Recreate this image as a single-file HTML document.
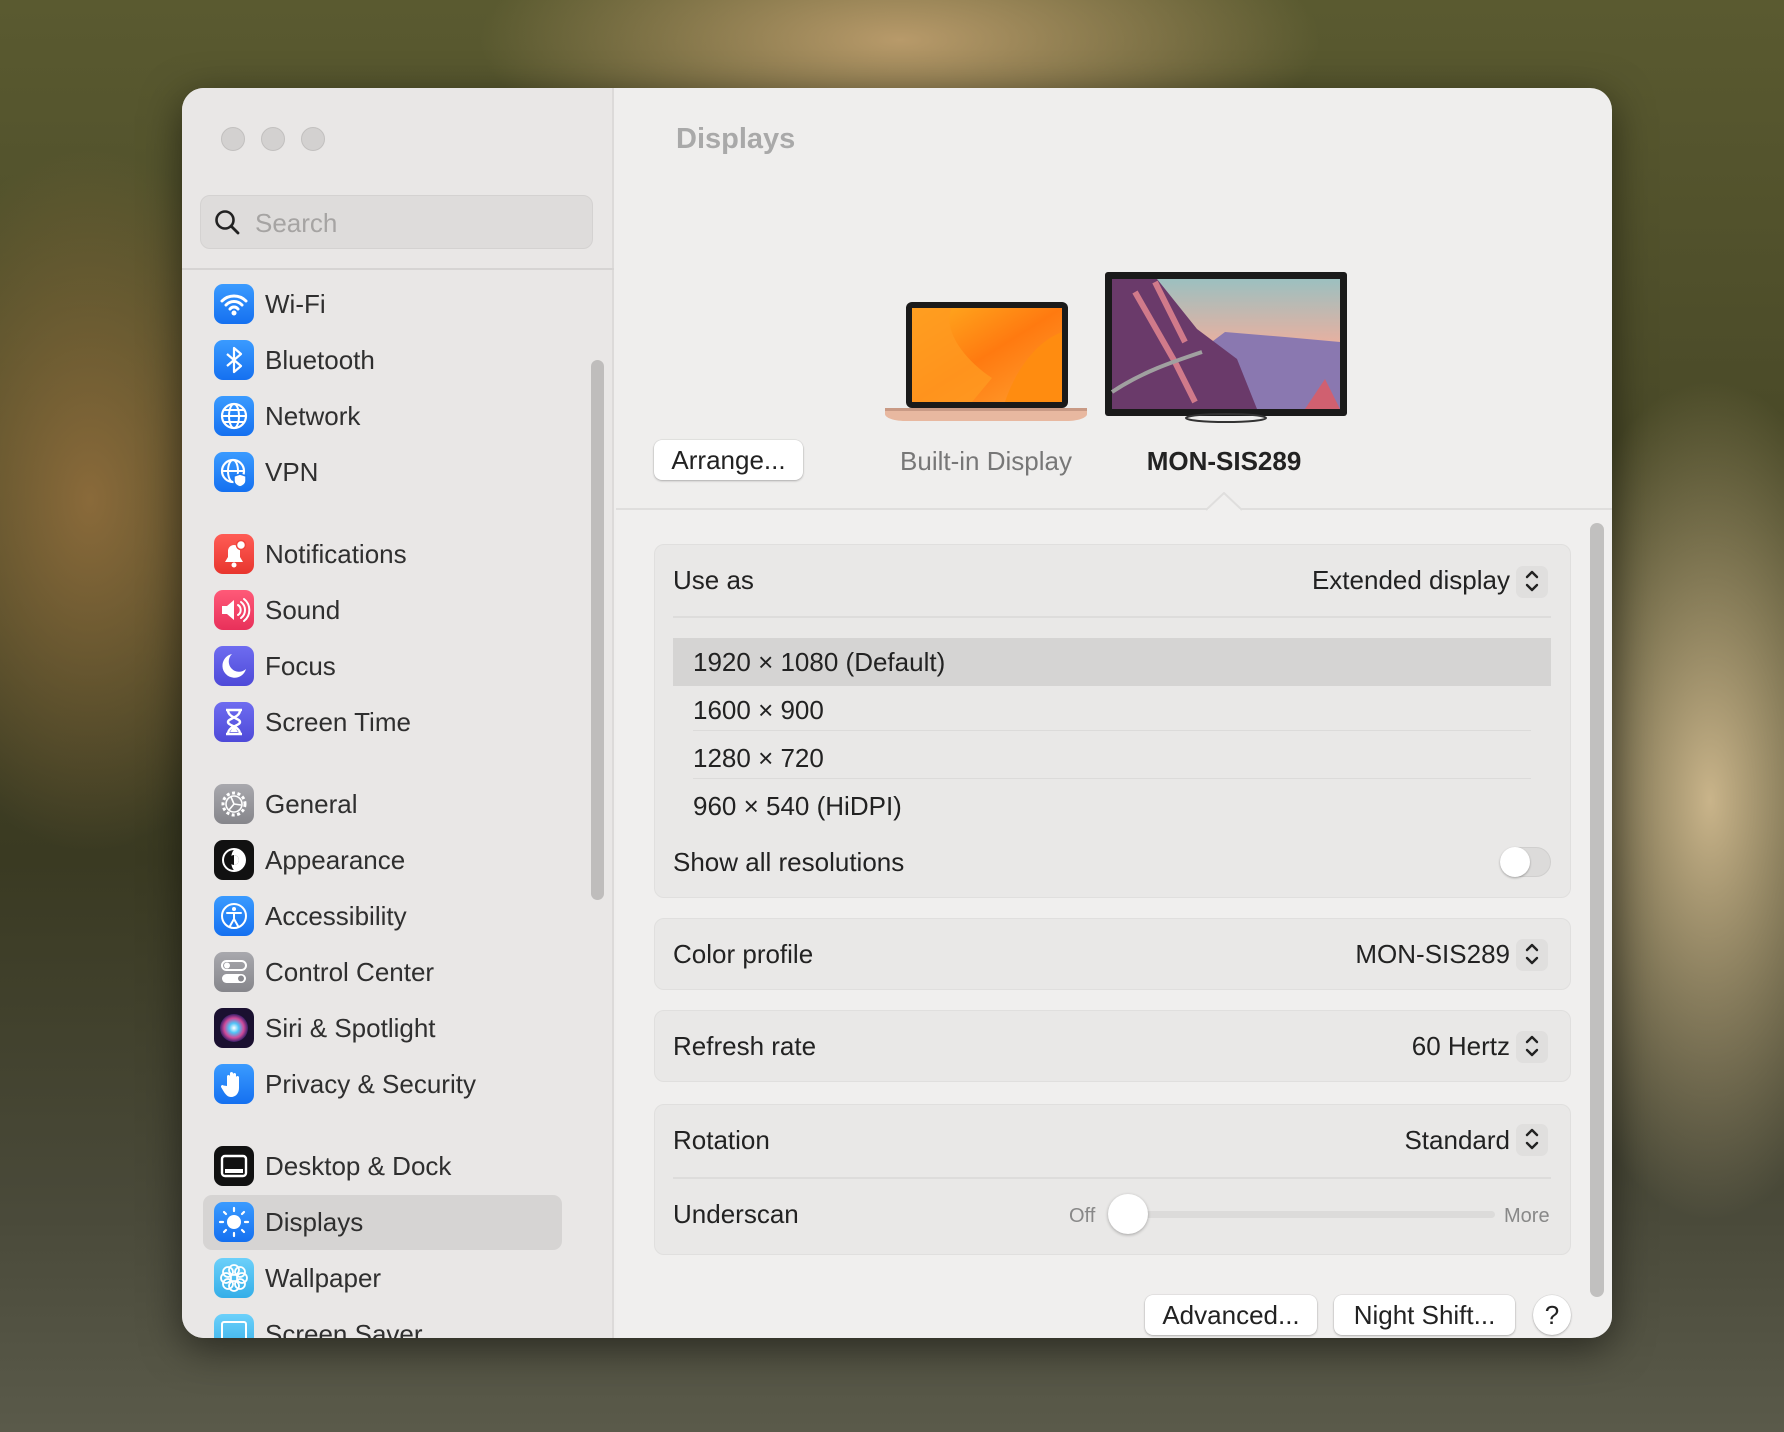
<!DOCTYPE html>
<html><head><meta charset="utf-8">
<style>
*{margin:0;padding:0;box-sizing:border-box}
html,body{width:1784px;height:1432px;overflow:hidden}
body{position:relative;font-family:"Liberation Sans",sans-serif;
background:
radial-gradient(ellipse 300px 500px at 90px 500px,#8a6a3a 0%,rgba(90,60,30,0) 70%),
radial-gradient(ellipse 260px 600px at 1710px 800px,#c9b48a 0%,rgba(120,110,70,0) 70%),
radial-gradient(ellipse 600px 200px at 900px 40px,#b89a6a 0%,rgba(80,80,40,0) 70%),
linear-gradient(180deg,#5a5a30 0%,#4a4a28 30%,#3a3a22 60%,#4a4a3a 85%,#5a5a4a 100%);}
.win{position:absolute;left:182px;top:88px;width:1430px;height:1250px;border-radius:22px;overflow:hidden;background:#efeeed;box-shadow:0 10px 40px rgba(0,0,0,.5)}
.side{position:absolute;left:0;top:0;width:432px;height:1250px;background:#e9e7e6;border-right:2px solid #dcdad9}
.tl{position:absolute;top:39px;width:24px;height:24px;border-radius:50%;background:#d3d1d0;border:1px solid #c2c0bf}
.search{position:absolute;left:18px;top:107px;width:393px;height:54px;border-radius:10px;background:#dedcdb;border:1px solid #d4d2d1}
.search span{position:absolute;left:54px;top:12px;font-size:26px;color:#a6a4a3}
.sep{position:absolute;left:0;top:180px;width:432px;height:2px;background:#d6d4d3}
.item{position:absolute;left:32px;height:40px;width:380px}
.item .ic{position:absolute;left:0;top:0;width:40px;height:40px;border-radius:9px;overflow:hidden}
.item .t{position:absolute;left:51px;top:5px;font-size:26px;color:#2f2f2f;white-space:nowrap}
.sel{position:absolute;left:21px;top:1107px;width:359px;height:55px;border-radius:9px;background:#d6d4d3}
.sscroll{position:absolute;left:409px;top:272px;width:13px;height:540px;border-radius:7px;background:#bfbdbc}
.main{position:absolute;left:434px;top:0;width:996px;height:1250px}
.title{position:absolute;left:60px;top:35px;font-size:29px;font-weight:bold;color:#a9a9a9}
.btn{position:absolute;background:#fff;border-radius:8px;box-shadow:0 1px 2px rgba(0,0,0,.25),0 0 0 .5px rgba(0,0,0,.08);font-size:26px;color:#222;text-align:center}
.lbl{position:absolute;font-size:26px;white-space:nowrap}
.hdrline{position:absolute;left:0;top:420px;width:996px;height:2px;background:#dfdedd}
.lower{position:absolute;left:0;top:421px;width:996px;height:829px;background:#f0efee}
.grp{position:absolute;left:38px;width:917px;border-radius:10px;background:#e9e8e7;border:1px solid #e0dfde}
.row{position:absolute;font-size:26px;color:#222;white-space:nowrap}
.step{position:absolute;width:32px;height:32px;border-radius:7px;background:#e0dfde}
.mscroll{position:absolute;left:974px;top:435px;width:14px;height:774px;border-radius:7px;background:#c1c0bf}
</style></head><body>
<div class="win">
 <div class="side">
  <div class="tl" style="left:39px"></div><div class="tl" style="left:79px"></div><div class="tl" style="left:119px"></div>
  <div class="search"><svg width="30" height="30" style="position:absolute;left:12px;top:12px" viewBox="0 0 30 30"><circle cx="12" cy="12" r="8.5" fill="none" stroke="#222" stroke-width="2.6"/><path d="M18 18l7 7" stroke="#222" stroke-width="2.8" stroke-linecap="round"/></svg><span>Search</span></div>
  <div class="sep"></div>
  <div class="sscroll"></div>
  <div class="sel"></div>

  <div class="item" style="top:196px"><div class="ic" style="background:linear-gradient(#3a9bff,#1570f0)"><svg width="40" height="40" viewBox="0 0 40 40"><path d="M8 17a17 17 0 0 1 24 0M12 21a11 11 0 0 1 16 0M16 25a5 5 0 0 1 8 0" fill="none" stroke="#fff" stroke-width="3" stroke-linecap="round"/><circle cx="20" cy="29" r="2.5" fill="#fff"/></svg></div><div class="t">Wi-Fi</div></div>
  <div class="item" style="top:252px"><div class="ic" style="background:linear-gradient(#3a9bff,#1570f0)"><svg width="40" height="40" viewBox="0 0 40 40"><path d="M13 14l14 12-7 6V8l7 6-14 12" fill="none" stroke="#fff" stroke-width="2.2" stroke-linejoin="round"/></svg></div><div class="t">Bluetooth</div></div>
  <div class="item" style="top:308px"><div class="ic" style="background:linear-gradient(#3a9bff,#1570f0)"><svg width="40" height="40" viewBox="0 0 40 40"><circle cx="20" cy="20" r="12" fill="none" stroke="#fff" stroke-width="2.2"/><ellipse cx="20" cy="20" rx="5" ry="12" fill="none" stroke="#fff" stroke-width="2"/><path d="M8 20h24M10 14h20M10 26h20" stroke="#fff" stroke-width="2"/></svg></div><div class="t">Network</div></div>
  <div class="item" style="top:364px"><div class="ic" style="background:linear-gradient(#3a9bff,#1570f0)"><svg width="40" height="40" viewBox="0 0 40 40"><circle cx="19" cy="19" r="11" fill="none" stroke="#fff" stroke-width="2.2"/><ellipse cx="19" cy="19" rx="5" ry="11" fill="none" stroke="#fff" stroke-width="2"/><path d="M8 19h22" stroke="#fff" stroke-width="2"/><path d="M26 22l6 2v5c0 3-3 5-6 6-3-1-6-3-6-6v-5z" fill="#fff" stroke="#1c7af2" stroke-width="1.5"/></svg></div><div class="t">VPN</div></div>

  <div class="item" style="top:446px"><div class="ic" style="background:linear-gradient(#ff5c55,#e8362e)"><svg width="40" height="40" viewBox="0 0 40 40"><path d="M11 28h18l-3-5v-6a6 6 0 0 0-12 0v6z" fill="#fff"/><circle cx="20" cy="31" r="2.5" fill="#fff"/><circle cx="27" cy="11" r="4.5" fill="#fff" stroke="#ef443c" stroke-width="1.5"/></svg></div><div class="t">Notifications</div></div>
  <div class="item" style="top:502px"><div class="ic" style="background:linear-gradient(#ff5a78,#e8305a)"><svg width="40" height="40" viewBox="0 0 40 40"><path d="M8 16h5l7-6v20l-7-6H8z" fill="#fff"/><path d="M24 15a6 6 0 0 1 0 10M27 12a10 10 0 0 1 0 16M30 9a14 14 0 0 1 0 22" fill="none" stroke="#fff" stroke-width="2" stroke-linecap="round"/></svg></div><div class="t">Sound</div></div>
  <div class="item" style="top:558px"><div class="ic" style="background:linear-gradient(#6e6cf0,#4e4ad8)"><svg width="40" height="40" viewBox="0 0 40 40"><path d="M18 8a12 12 0 1 0 14 15A10 10 0 0 1 18 8z" fill="#fff"/></svg></div><div class="t">Focus</div></div>
  <div class="item" style="top:614px"><div class="ic" style="background:linear-gradient(#6e6cf0,#4e4ad8)"><svg width="40" height="40" viewBox="0 0 40 40"><path d="M12 8h16M12 32h16M14 8c0 8 12 8 12 12s-12 4-12 12M26 8c0 8-12 8-12 12s12 4 12 12" fill="none" stroke="#fff" stroke-width="2.4"/><path d="M16 30l4-6 4 6z" fill="#fff"/></svg></div><div class="t">Screen Time</div></div>

  <div class="item" style="top:696px"><div class="ic" style="background:linear-gradient(#a8a8ad,#86868b)"><svg width="40" height="40" viewBox="0 0 40 40"><circle cx="20" cy="20" r="11" fill="none" stroke="#fff" stroke-width="3" stroke-dasharray="3 2.5"/><circle cx="20" cy="20" r="8" fill="none" stroke="#fff" stroke-width="1.6"/><path d="M20 20l-3-7M20 20l7 1M20 20l-5 6" stroke="#fff" stroke-width="1.6"/></svg></div><div class="t">General</div></div>
  <div class="item" style="top:752px"><div class="ic" style="background:#111"><svg width="40" height="40" viewBox="0 0 40 40"><circle cx="20" cy="20" r="12" fill="#fff"/><path d="M20 10a10 10 0 0 0 0 20c-4-3-4-17 0-20z" fill="#111"/><circle cx="20" cy="20" r="5" fill="#111"/><path d="M20 15a5 5 0 0 1 0 10z" fill="#fff"/></svg></div><div class="t">Appearance</div></div>
  <div class="item" style="top:808px"><div class="ic" style="background:linear-gradient(#3a9bff,#1570f0)"><svg width="40" height="40" viewBox="0 0 40 40"><circle cx="20" cy="20" r="12" fill="none" stroke="#fff" stroke-width="2"/><circle cx="20" cy="13" r="2" fill="#fff"/><path d="M13 17h14M20 17v6l-4 7M20 23l4 7" fill="none" stroke="#fff" stroke-width="2" stroke-linecap="round"/></svg></div><div class="t">Accessibility</div></div>
  <div class="item" style="top:864px"><div class="ic" style="background:linear-gradient(#a8a8ad,#86868b)"><svg width="40" height="40" viewBox="0 0 40 40"><rect x="8" y="9" width="24" height="9" rx="4.5" fill="none" stroke="#fff" stroke-width="2"/><circle cx="13" cy="13.5" r="3" fill="#fff"/><rect x="8" y="22" width="24" height="9" rx="4.5" fill="#fff"/><circle cx="27" cy="26.5" r="3" fill="#8a8a8f"/></svg></div><div class="t">Control Center</div></div>
  <div class="item" style="top:920px"><div class="ic" style="background:#1a1030"><svg width="40" height="40" viewBox="0 0 40 40"><defs><radialGradient id="sg" cx="50%" cy="50%"><stop offset="0" stop-color="#fff"/><stop offset=".35" stop-color="#4fc3f7"/><stop offset=".7" stop-color="#d04a9a"/><stop offset="1" stop-color="#3a1f6a"/></radialGradient></defs><circle cx="20" cy="20" r="14" fill="url(#sg)"/></svg></div><div class="t">Siri &amp; Spotlight</div></div>
  <div class="item" style="top:976px"><div class="ic" style="background:linear-gradient(#3a9bff,#1570f0)"><svg width="40" height="40" viewBox="0 0 40 40"><path d="M13 22V12a1.6 1.6 0 0 1 3 0v8V9a1.6 1.6 0 0 1 3 0v11V10a1.6 1.6 0 0 1 3 0v10v-7a1.6 1.6 0 0 1 3 0v11c0 5-3 9-8 9-3 0-5-2-7-5l-3-5a1.5 1.5 0 0 1 2.5-1.5z" fill="#fff"/></svg></div><div class="t">Privacy &amp; Security</div></div>

  <div class="item" style="top:1058px"><div class="ic" style="background:#111"><svg width="40" height="40" viewBox="0 0 40 40"><rect x="8" y="10" width="24" height="20" rx="3" fill="none" stroke="#fff" stroke-width="2.4"/><rect x="11" y="23" width="18" height="4" fill="#fff"/></svg></div><div class="t">Desktop &amp; Dock</div></div>
  <div class="item" style="top:1114px"><div class="ic" style="background:linear-gradient(#3a9bff,#1570f0)"><svg width="40" height="40" viewBox="0 0 40 40"><circle cx="20" cy="20" r="7" fill="#fff"/><g stroke="#fff" stroke-width="2.2" stroke-linecap="round"><path d="M20 6v3M20 31v3M6 20h3M31 20h3M10 10l2 2M28 28l2 2M10 30l2-2M28 12l2-2"/></g></svg></div><div class="t">Displays</div></div>
  <div class="item" style="top:1170px"><div class="ic" style="background:linear-gradient(#6cd0fa,#34aee8)"><svg width="40" height="40" viewBox="0 0 40 40"><g fill="none" stroke="#fff" stroke-width="1.8"><circle cx="20" cy="12" r="5"/><circle cx="20" cy="28" r="5"/><circle cx="12" cy="20" r="5"/><circle cx="28" cy="20" r="5"/><circle cx="14" cy="14" r="5"/><circle cx="26" cy="26" r="5"/><circle cx="26" cy="14" r="5"/><circle cx="14" cy="26" r="5"/></g></svg></div><div class="t">Wallpaper</div></div>
  <div class="item" style="top:1226px"><div class="ic" style="background:linear-gradient(#6cd0fa,#34aee8)"><svg width="40" height="40" viewBox="0 0 40 40"><rect x="8" y="8" width="24" height="20" rx="2" fill="none" stroke="#fff" stroke-width="2"/></svg></div><div class="t">Screen Saver</div></div>
 </div>

 <div class="main">
  <div class="title">Displays</div>
  <div class="btn" style="left:38px;top:352px;width:149px;height:40px;line-height:40px">Arrange...</div>
  <svg style="position:absolute;left:269px;top:214px" width="202" height="121" viewBox="0 0 202 121">
   <defs><linearGradient id="lo" x1="0" y1="0" x2="1" y2="1"><stop offset="0" stop-color="#ffb020"/><stop offset=".5" stop-color="#ff7a10"/><stop offset="1" stop-color="#ffa030"/></linearGradient></defs>
   <rect x="21" y="0" width="162" height="106" rx="6" fill="#1a1a1a"/>
   <rect x="27" y="6" width="150" height="94" fill="url(#lo)"/>
   <path d="M27 6h40c-10 20 10 50 40 70l-20 24H27z" fill="#ff9a20" opacity=".8"/>
   <path d="M120 100c10-30 30-60 57-70v70z" fill="#ff8c10"/>
   <path d="M0 106h202v6c0 4-10 7-20 7H20c-10 0-20-3-20-7z" fill="#e8b8a0"/>
   <rect x="0" y="106" width="202" height="3" fill="#c99a85"/>
  </svg>
  <svg style="position:absolute;left:489px;top:184px" width="242" height="151" viewBox="0 0 242 151">
   <defs><linearGradient id="sk" x1="0" y1="0" x2="0" y2="1"><stop offset="0" stop-color="#9cc0c0"/><stop offset=".5" stop-color="#e8b0a0"/><stop offset="1" stop-color="#7a6aa0"/></linearGradient></defs>
   <rect x="0" y="0" width="242" height="144" rx="3" fill="#1a1a1a"/>
   <rect x="7" y="7" width="228" height="130" fill="url(#sk)"/>
   <path d="M7 60L80 90 120 60 180 65 235 70V137H7z" fill="#8a78b0"/>
   <path d="M7 7h45l40 50 40 30 20 50H7z" fill="#6a3a6a"/>
   <path d="M30 20l40 70 20 40M50 10l30 60" stroke="#d07a8a" stroke-width="6" fill="none"/>
   <path d="M7 120c30-20 60-30 90-40" stroke="#a0a0a0" stroke-width="4" fill="none"/>
   <path d="M200 137l20-30 15 30z" fill="#d06070"/>
   <ellipse cx="121" cy="146" rx="40" ry="4" fill="none" stroke="#333" stroke-width="2"/>
  </svg>
  <div class="lbl" style="left:270px;top:358px;color:#777;width:200px;text-align:center">Built-in Display</div>
  <div class="lbl" style="left:508px;top:358px;color:#222;width:200px;text-align:center;font-weight:bold">MON-SIS289</div>
  <div class="lower"></div>
  <div class="hdrline"></div>
  <svg style="position:absolute;left:590px;top:404px" width="36" height="20" viewBox="0 0 36 20"><path d="M0 18L18 1 36 18" fill="#f0efee" stroke="#dfdedd" stroke-width="2"/><rect x="2" y="17" width="32" height="4" fill="#f0efee"/></svg>
  <div class="mscroll"></div>

  <div class="grp" style="top:456px;height:354px">
   <div class="row" style="left:18px;top:20px">Use as</div>
   <div class="row" style="right:60px;top:20px">Extended display</div>
   <div class="step" style="left:861px;top:21px"></div>
   <div style="position:absolute;left:18px;top:71px;width:878px;height:2px;background:#dddcdb"></div>
   <div style="position:absolute;left:18px;top:93px;width:878px;height:48px;background:#d5d4d3"></div>
   <div class="row" style="left:38px;top:102px">1920 × 1080 (Default)</div>
   <div class="row" style="left:38px;top:150px">1600 × 900</div>
   <div style="position:absolute;left:38px;top:185px;width:838px;height:1px;background:#dcdbda"></div>
   <div class="row" style="left:38px;top:198px">1280 × 720</div>
   <div style="position:absolute;left:38px;top:233px;width:838px;height:1px;background:#dcdbda"></div>
   <div class="row" style="left:38px;top:246px">960 × 540 (HiDPI)</div>
   <div class="row" style="left:18px;top:302px">Show all resolutions</div>
   <div style="position:absolute;left:845px;top:302px;width:51px;height:30px;border-radius:15px;background:#dcdbda;border:1px solid #d0cfce"></div>
   <div style="position:absolute;left:845px;top:302px;width:30px;height:30px;border-radius:50%;background:#fff;box-shadow:0 1px 2px rgba(0,0,0,.3)"></div>
  </div>

  <div class="grp" style="top:830px;height:72px">
   <div class="row" style="left:18px;top:20px">Color profile</div>
   <div class="row" style="right:60px;top:20px">MON-SIS289</div>
   <div class="step" style="left:861px;top:20px"></div>
  </div>
  <div class="grp" style="top:922px;height:72px">
   <div class="row" style="left:18px;top:20px">Refresh rate</div>
   <div class="row" style="right:60px;top:20px">60 Hertz</div>
   <div class="step" style="left:861px;top:20px"></div>
  </div>
  <div class="grp" style="top:1016px;height:151px">
   <div class="row" style="left:18px;top:20px">Rotation</div>
   <div class="row" style="right:60px;top:20px">Standard</div>
   <div class="step" style="left:861px;top:19px"></div>
   <div style="position:absolute;left:18px;top:72px;width:878px;height:2px;background:#dddcdb"></div>
   <div class="row" style="left:18px;top:94px">Underscan</div>
   <div class="row" style="left:414px;top:100px;font-size:20px;color:#888">Off</div>
   <div style="position:absolute;left:470px;top:106px;width:370px;height:7px;border-radius:4px;background:#dcdbda"></div>
   <div style="position:absolute;left:453px;top:89px;width:40px;height:40px;border-radius:50%;background:#fff;box-shadow:0 1px 3px rgba(0,0,0,.3)"></div>
   <div class="row" style="left:849px;top:100px;font-size:20px;color:#888">More</div>
  </div>

  <div class="btn" style="left:529px;top:1207px;width:172px;height:40px;line-height:40px">Advanced...</div>
  <div class="btn" style="left:718px;top:1207px;width:181px;height:40px;line-height:40px">Night Shift...</div>
  <div class="btn" style="left:917px;top:1207px;width:38px;height:40px;line-height:40px;border-radius:50%">?</div>
 </div>
</div>
<svg width="0" height="0" style="position:absolute"><defs><symbol id="ch" viewBox="0 0 32 32"><path d="M11 12l5-5 5 5M11 20l5 5 5-5" fill="none" stroke="#222" stroke-width="2.4" stroke-linecap="round" stroke-linejoin="round"/></symbol></defs></svg>
<svg style="position:absolute;left:1516px;top:565px" width="32" height="32"><use href="#ch"/></svg>
<svg style="position:absolute;left:1516px;top:938px" width="32" height="32"><use href="#ch"/></svg>
<svg style="position:absolute;left:1516px;top:1030px" width="32" height="32"><use href="#ch"/></svg>
<svg style="position:absolute;left:1516px;top:1123px" width="32" height="32"><use href="#ch"/></svg>
</body></html>
